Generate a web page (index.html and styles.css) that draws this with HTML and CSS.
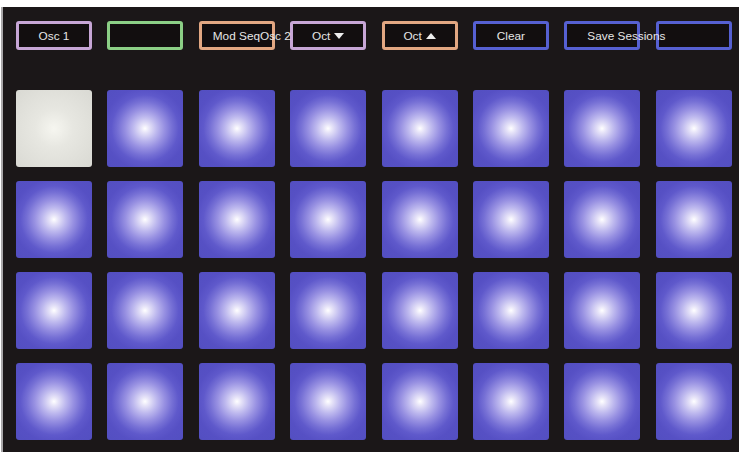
FILE: index.html
```html
<!DOCTYPE html>
<html>
<head>
<meta charset="utf-8">
<link rel="stylesheet" href="styles.css">
</head>
<body>
<div class="frame">
  <div class="toolbar">
    <div class="btn btn--purple"><span class="label">Osc 1</span></div>
    <div class="btn btn--green"></div>
    <div class="btn btn--orange btn--left btn--mod"><span class="label">Mod SeqOsc 2</span></div>
    <div class="btn btn--purple"><span class="label">Oct <svg class="tri" width="10" height="6" viewBox="0 0 10 6"><polygon points="0,0 10,0 5,6" fill="#eeeeee"/></svg></span></div>
    <div class="btn btn--orange"><span class="label">Oct <svg class="tri" width="10" height="6" viewBox="0 0 10 6"><polygon points="0,6 10,6 5,0" fill="#eeeeee"/></svg></span></div>
    <div class="btn btn--blue"><span class="label">Clear</span></div>
    <div class="btn btn--blue btn--left btn--save"><span class="label">Save Sessions</span></div>
    <div class="btn btn--blue"></div>
  </div>
  <div class="pads">
    <div class="pad pad--on"></div>
    <div class="pad"></div><div class="pad"></div><div class="pad"></div><div class="pad"></div><div class="pad"></div><div class="pad"></div><div class="pad"></div>
    <div class="pad"></div><div class="pad"></div><div class="pad"></div><div class="pad"></div><div class="pad"></div><div class="pad"></div><div class="pad"></div><div class="pad"></div>
    <div class="pad"></div><div class="pad"></div><div class="pad"></div><div class="pad"></div><div class="pad"></div><div class="pad"></div><div class="pad"></div><div class="pad"></div>
    <div class="pad"></div><div class="pad"></div><div class="pad"></div><div class="pad"></div><div class="pad"></div><div class="pad"></div><div class="pad"></div><div class="pad"></div>
  </div>
</div>
</body>
</html>
```

FILE: styles.css
```css
html, body {
  margin: 0;
  padding: 0;
  background: #ffffff;
}
body {
  width: 748px;
  height: 457px;
  overflow: hidden;
  font-family: "Liberation Sans", Arial, sans-serif;
}
.frame {
  box-sizing: border-box;
  margin: 7px 9px 0 3px;
  width: 736px;
  height: 445px;
  background: #1b1718;
  padding: 14px 7px 0 13px;
  box-shadow: -2px 0 0 #a8a6a8;
}
.toolbar {
  display: grid;
  grid-template-columns: repeat(8, 76px);
  column-gap: 15.4px;
  height: 29px;
}
.btn {
  box-sizing: border-box;
  height: 29px;
  border: 3px solid #c9a8d8;
  border-radius: 3px;
  background: #120e0f;
  display: flex;
  align-items: center;
  justify-content: center;
  color: #e6e6e6;
  font-size: 11.8px;
  white-space: nowrap;
  position: relative;
}
.btn--purple { border-color: #c7a6d6; }
.btn--green { border-color: #8ccf86; }
.btn--orange { border-color: #e2a782; }
.btn--blue { border-color: #5660d2; }
.btn--left { justify-content: flex-start; }
.btn--mod { padding-left: 11px; }
.btn--save { padding-left: 20px; }
.label {
  display: inline-flex;
  align-items: center;
  gap: 4px;
  position: relative;
  z-index: 1;
}
.tri {
  display: block;
}
.pads {
  margin-top: 40px;
  display: grid;
  grid-template-columns: repeat(8, 76px);
  grid-auto-rows: 77px;
  column-gap: 15.4px;
  row-gap: 14px;
}
.pad {
  border-radius: 3px;
  background: radial-gradient(circle at 50% 50%, #ffffff 0%, #e6e3f8 8%, #bdb8ee 22%, #9891e2 36%, #7670d5 50%, #5f59cb 62%, #5650c4 76%, #534fc1 100%);
}
.pad--on {
  background: radial-gradient(circle at 50% 50%, #f6f6f0 0%, #e7e7e1 35%, #d9d9d3 100%);
}
```
